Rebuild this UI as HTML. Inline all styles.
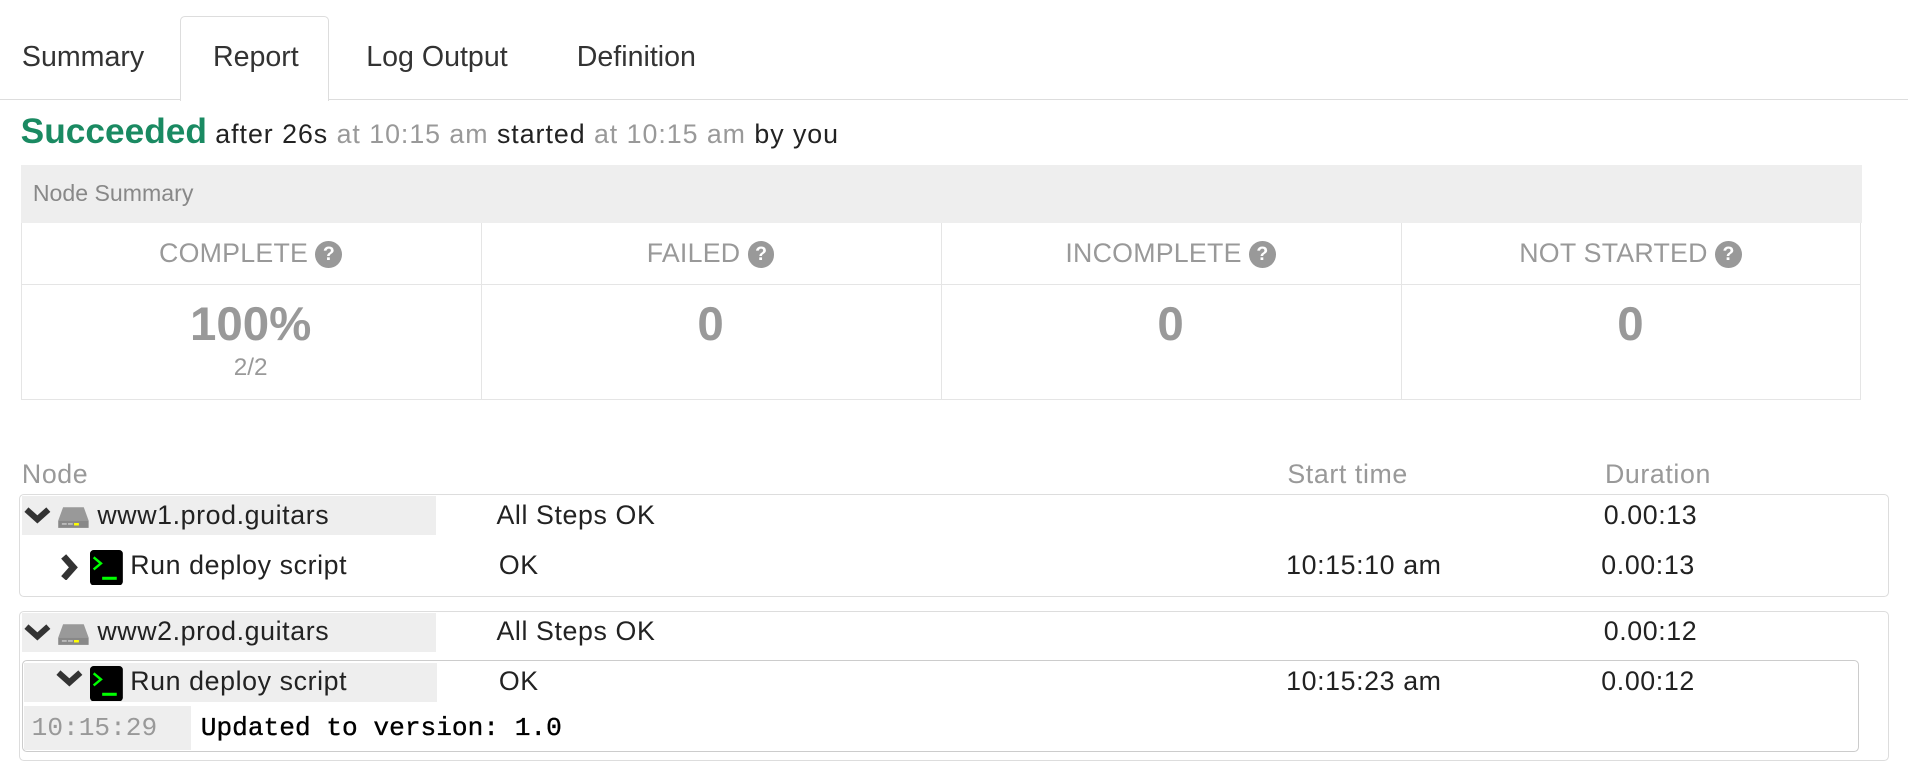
<!DOCTYPE html>
<html><head><meta charset="utf-8"><style>
html,body{margin:0;padding:0;background:#fff;overflow:hidden}
body{width:1908px;height:770px}
#w{zoom:1.2168;position:relative;width:1568px;height:633px;font-family:"Liberation Sans",Arial,sans-serif;color:#333}
.a{position:absolute;white-space:nowrap}
.tab{font-size:23.5px;top:34px;color:#333}
.g{color:#999}
.q{display:inline-block;width:22px;height:22px;border-radius:50%;background:#999;color:#fff;font-size:16px;font-weight:bold;text-align:center;line-height:22px;vertical-align:2px;margin-left:6px;letter-spacing:0}
.hd{font-size:22px;letter-spacing:0.2px;color:#999;text-align:center;width:378px;top:196px}
.num{font-size:39px;font-weight:bold;color:#999;text-align:center;width:378px;top:244px}
.t{font-size:22px;letter-spacing:0.5px;color:#222}
.box{position:absolute;border:1.5px solid #ddd;border-radius:4px}
.gb{position:absolute;background:#eee}
.mono{font-family:"Liberation Mono",monospace;font-size:21.5px}
</style></head><body><div id="w">
<div class="a" style="left:0;top:81px;width:1568px;height:1px;background:#ddd"></div>
<div class="a" style="left:148px;top:13px;width:121px;height:69px;border:1px solid #ddd;border-bottom:none;border-radius:4px 4px 0 0;background:#fff"></div>
<div class="a tab" style="left:18px">Summary</div>
<div class="a tab" style="left:175px">Report</div>
<div class="a tab" style="left:301px">Log Output</div>
<div class="a tab" style="left:474px">Definition</div>
<div class="a" style="left:17px;top:92px;font-size:22px;letter-spacing:0.8px;color:#222"><span style="color:#1a8a62;font-weight:bold;font-size:29px;letter-spacing:0">Succeeded</span> after 26s <span class="g">at 10:15 am</span> started <span class="g">at 10:15 am</span> by you</div>
<div class="a" style="left:17px;top:136px;width:1513px;height:47px;background:#eee"></div>
<div class="a" style="left:27px;top:148px;font-size:19px;color:#888">Node Summary</div>
<div class="a" style="left:17px;top:183px;width:1511px;height:145px;border:1px solid #e5e5e5;border-top:none"></div>
<div class="a" style="left:18px;top:233px;width:1511px;height:1px;background:#e5e5e5"></div>
<div class="a" style="left:395px;top:183px;width:1px;height:146px;background:#e5e5e5"></div>
<div class="a" style="left:773px;top:183px;width:1px;height:146px;background:#e5e5e5"></div>
<div class="a" style="left:1151px;top:183px;width:1px;height:146px;background:#e5e5e5"></div>
<div class="a hd" style="left:17px">COMPLETE<span class="q">?</span></div>
<div class="a hd" style="left:395px">FAILED<span class="q">?</span></div>
<div class="a hd" style="left:773px">INCOMPLETE<span class="q">?</span></div>
<div class="a hd" style="left:1151px">NOT STARTED<span class="q">?</span></div>
<div class="a num" style="left:17px">100%</div>
<div class="a num" style="left:395px">0</div>
<div class="a num" style="left:773px">0</div>
<div class="a num" style="left:1151px">0</div>
<div class="a" style="left:17px;top:291px;width:378px;text-align:center;font-size:20px;color:#999">2/2</div>
<div class="a t" style="left:18px;top:377px;color:#999">Node</div>
<div class="a t" style="left:1058px;top:377px;color:#999">Start time</div>
<div class="a t" style="left:1319px;top:377px;color:#999">Duration</div>
<div class="box" style="left:16px;top:406px;width:1535px;height:83px"></div>
<div class="gb" style="left:18px;top:408px;width:340px;height:32px"></div>
<svg class="a" style="left:20px;top:416px" width="22" height="16" viewBox="0 0 22 16"><path d="M2 3 L11 11 L20 3" stroke="#333" stroke-width="5" fill="none"/></svg>
<svg class="a" style="left:47px;top:416px" width="27" height="19" viewBox="0 0 27 19"><path d="M5 1 H22 L26 12 H1 Z" fill="#999"/><rect x="1" y="12" width="25" height="6" fill="#888"/><rect x="4" y="14" width="4" height="1.5" fill="#bbb"/><rect x="9" y="14" width="4" height="1.5" fill="#bbb"/><rect x="14" y="14" width="4" height="2" fill="#ff0"/></svg>
<div class="a t" style="left:80px;top:411px">www1.prod.guitars</div>
<div class="a t" style="left:408px;top:411px">All Steps OK</div>
<div class="a t" style="left:1318px;top:411px">0.00:13</div>
<svg class="a" style="left:49px;top:455px" width="16" height="22" viewBox="0 0 16 22"><path d="M3 2 L11 11 L3 20" stroke="#333" stroke-width="5.5" fill="none"/></svg>
<svg class="a" style="left:74px;top:452px" width="27" height="29" viewBox="0 0 27 29"><rect width="27" height="29" rx="3" fill="#000"/><path d="M3 6 L9 11 L3 16" stroke="#0f0" stroke-width="2" fill="none"/><rect x="10" y="22" width="12" height="2.5" fill="#0f0"/></svg>
<div class="a t" style="left:107px;top:452px">Run deploy script</div>
<div class="a t" style="left:410px;top:452px">OK</div>
<div class="a t" style="left:1057px;top:452px">10:15:10 am</div>
<div class="a t" style="left:1316px;top:452px">0.00:13</div>
<div class="box" style="left:16px;top:502px;width:1535px;height:122px"></div>
<div class="gb" style="left:18px;top:504px;width:340px;height:32px"></div>
<svg class="a" style="left:20px;top:512px" width="22" height="16" viewBox="0 0 22 16"><path d="M2 3 L11 11 L20 3" stroke="#333" stroke-width="5" fill="none"/></svg>
<svg class="a" style="left:47px;top:512px" width="27" height="19" viewBox="0 0 27 19"><path d="M5 1 H22 L26 12 H1 Z" fill="#999"/><rect x="1" y="12" width="25" height="6" fill="#888"/><rect x="4" y="14" width="4" height="1.5" fill="#bbb"/><rect x="9" y="14" width="4" height="1.5" fill="#bbb"/><rect x="14" y="14" width="4" height="2" fill="#ff0"/></svg>
<div class="a t" style="left:80px;top:506px">www2.prod.guitars</div>
<div class="a t" style="left:408px;top:506px">All Steps OK</div>
<div class="a t" style="left:1318px;top:506px">0.00:12</div>
<div class="box" style="left:18px;top:542px;width:1508px;height:74px;border-color:#ccc"></div>
<div class="gb" style="left:20px;top:545px;width:339px;height:32px"></div>
<svg class="a" style="left:46px;top:550px" width="22" height="16" viewBox="0 0 22 16"><path d="M2 3 L11 11 L20 3" stroke="#333" stroke-width="5" fill="none"/></svg>
<svg class="a" style="left:74px;top:547px" width="27" height="29" viewBox="0 0 27 29"><rect width="27" height="29" rx="3" fill="#000"/><path d="M3 6 L9 11 L3 16" stroke="#0f0" stroke-width="2" fill="none"/><rect x="10" y="22" width="12" height="2.5" fill="#0f0"/></svg>
<div class="a t" style="left:107px;top:547px">Run deploy script</div>
<div class="a t" style="left:410px;top:547px">OK</div>
<div class="a t" style="left:1057px;top:547px">10:15:23 am</div>
<div class="a t" style="left:1316px;top:547px">0.00:12</div>
<div class="gb" style="left:20px;top:580px;width:137px;height:36px"></div>
<div class="a mono" style="left:26px;top:586px;color:#999">10:15:29</div>
<div class="a mono" style="left:165px;top:586px;color:#000;-webkit-text-stroke:0.3px #000">Updated to version: 1.0</div>
</div></body></html>
